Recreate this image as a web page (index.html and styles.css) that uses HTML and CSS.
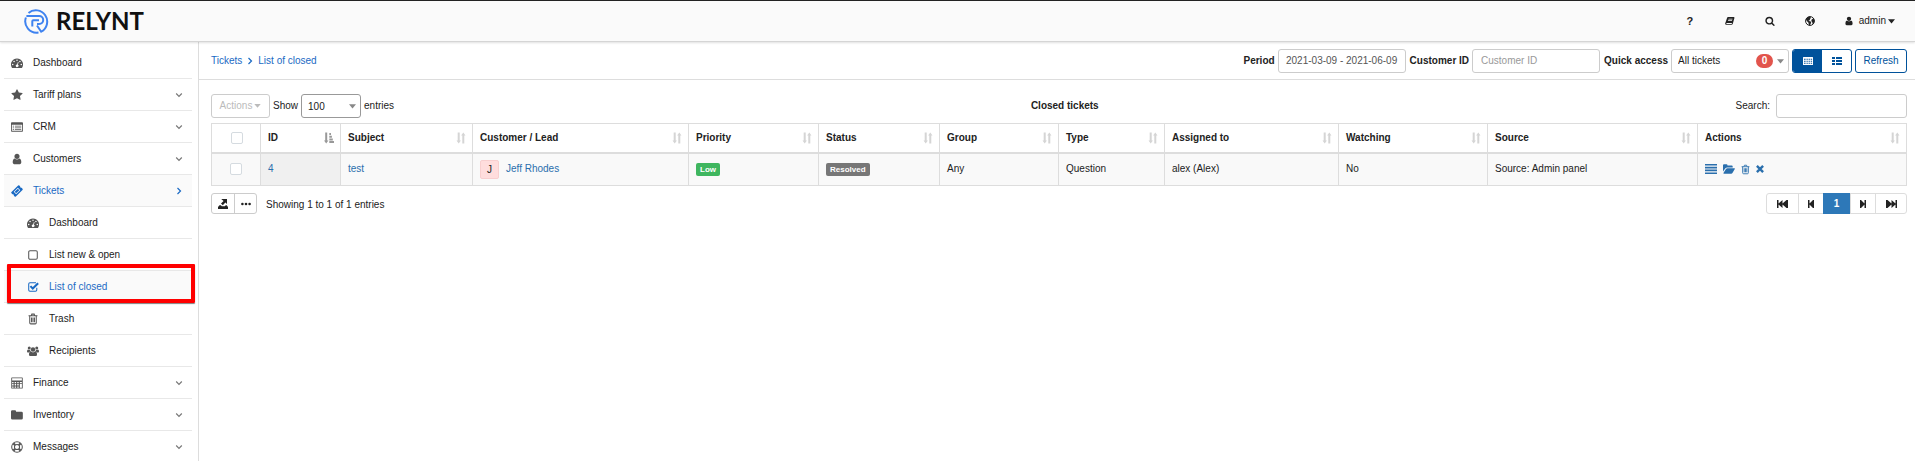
FILE: index.html
```html
<!DOCTYPE html>
<html lang="en">
<head>
<meta charset="utf-8">
<title>List of closed - Tickets</title>
<link rel="stylesheet" href="styles.css">
</head>
<body>
<svg class="sprite" aria-hidden="true">
  <symbol id="gauge" viewBox="0 0 16 14"><path fill-rule="evenodd" d="M8 1a8 8 0 0 0-6.800 12.200q.2.300.5.300h12.600q.3 0 .5-.3A8 8 0 0 0 8 1zM2.300 8a1 1 0 1 1 0 2 1 1 0 0 1 0-2zm1.800-3.900a1 1 0 1 1 0 2 1 1 0 0 1 0-2zM8 2.300a1 1 0 1 1 0 2 1 1 0 0 1 0-2zm1.200 3.200.9.300-.9 3.400a1.800 1.800 0 1 1-1-.300zM11.900 4.100a1 1 0 1 1 0 2 1 1 0 0 1 0-2zm1.800 3.900a1 1 0 1 1 0 2 1 1 0 0 1 0-2z"/></symbol>
  <symbol id="star" viewBox="0 0 1792 1792"><path d="M1728 647q0 22-26 48l-363 354 86 500q1 7 1 20 0 21-10.500 35.500t-30.500 14.500q-19 0-40-12l-449-236-449 236q-22 12-40 12-21 0-31.500-14.500t-10.500-35.500q0-6 2-20l86-500-364-354q-25-27-25-48 0-37 56-46l502-73 225-455q19-41 49-41t49 41l225 455 502 73q56 9 56 46z"/></symbol>
  <symbol id="crm" viewBox="0 0 14 12"><path fill-rule="evenodd" d="M1 .5h12q1 0 1 1v9q0 1-1 1H1q-1 0-1-1v-9q0-1 1-1zM1 3.500v7h12v-7zM2 4.500h1.500v1H2zm2.500 0H12v1H4.500zM2 6.500h1.500v1H2zm2.500 0H12v1H4.500zM2 8.500h1.500v1H2zm2.500 0H12v1H4.500z"/></symbol>
  <symbol id="user" viewBox="128 0 1536 1792"><path d="M1536 1399q0 109-62.500 187t-150.500 78h-854q-88 0-150.500-78t-62.500-187q0-85 8.500-160.500t31.500-152 58.500-131 94-89 134.500-34.500q131 128 313 128t313-128q76 0 134.500 34.500t94 89 58.500 131 31.500 152 8.500 160.500zm-256-887q0 159-112.500 271.500t-271.500 112.500-271.500-112.500-112.500-271.500 112.500-271.500 271.500-112.500 271.500 112.500 112.500 271.500z"/></symbol>
  <symbol id="ticket" viewBox="0 0 14 14"><path fill-rule="evenodd" d="M8.300.6q.7-.7 1.400 0l1 1a1.500 1.500 0 0 0 1.700 1.700l1 1q.7.700 0 1.400l-7.700 7.700q-.7.700-1.400 0l-1-1a1.500 1.500 0 0 0-1.700-1.700l-1-1q-.7-.7 0-1.400zM8 3.200 3.200 8 6 10.800 10.800 6zM8 4.300 9.700 6 6 9.700 4.300 8z"/></symbol>
  <symbol id="square" viewBox="0 0 14 14"><rect x="2" y="2" width="10" height="10" rx="1.500" fill="none" stroke="currentColor" stroke-width="1.200"/></symbol>
  <symbol id="check" viewBox="0 0 14 14"><path fill="none" stroke="currentColor" stroke-width="1.200" d="M11.400 8v2.500q0 1.500-1.500 1.500H3.500Q2 12 2 10.500v-7Q2 2 3.500 2h7"/><path fill="none" stroke="currentColor" stroke-width="2.400" d="m4 6 2.700 2.700 6.300-6.200"/></symbol>
  <symbol id="trash" viewBox="0 0 12 14"><path fill="none" stroke="currentColor" stroke-width="1.200" d="M.8 3.300h10.400M2.200 3.300v8q0 1.400 1.200 1.400h5.200q1.200 0 1.200-1.400v-8M4 3l.6-1.700h2.800L8 3M4.300 5.300v5.400M6 5.300v5.400M7.700 5.300v5.400"/></symbol>
  <symbol id="group" viewBox="0 0 16 14"><circle cx="3" cy="3" r="2"/><circle cx="13" cy="3" r="2"/><circle cx="8" cy="5" r="3"/><path d="M0 8q0-3 1.500-3Q3 6 4.200 5.600 4.300 7 5 8H3.400L2.500 9H1Q0 9 0 8zm16 0q0-3-1.500-3-1.500 1-2.700.6-.1 1.400-.8 2.400h1.600l.9 1H15q1 0 1-1zM2.600 12q0-4.200 2.700-4.200Q8 10 10.700 7.800q2.700 0 2.700 4.200 0 1.800-1.800 1.800H4.400Q2.600 13.800 2.600 12z"/></symbol>
  <symbol id="calc" viewBox="0 0 14 14"><path fill-rule="evenodd" d="M1 .5h12q.7 0 .7.700v11.600q0 .7-.7.700H1q-.7 0-.7-.7V1.200Q.3.500 1 .5zM1.300 1.500v2.700h11.400V1.500zM1.300 5.700v1.500H3V5.700zm3 0v1.500H6V5.700zm3 0v1.500H9V5.700zm3 0v1.500h2.400V5.700zM1.300 8.300v1.600H3V8.300zm3 0v1.600H6V8.300zm3 0v1.600H9V8.300zM1.300 11v1.500H3V11zm3 0v1.500H6V11zm3 0v1.500H9V11zm3-2.700v4.200h2.400V8.300z"/></symbol>
  <symbol id="folder" viewBox="0 0 14 12"><path d="M0 2Q0 .5 1.500.5h3Q6 .5 6 2.200h6.200q1.600 0 1.600 1.600v5.900q0 1.600-1.600 1.600H1.600Q0 11.300 0 9.700z"/></symbol>
  <symbol id="ring" viewBox="0 0 14 14"><g fill="none" stroke="currentColor" stroke-width="1.200"><circle cx="7" cy="7" r="6.200"/><circle cx="7" cy="7" r="3"/><path stroke-width="2.600" d="m2.700 2.700 2.200 2.200M11.300 2.700 9.100 4.900M2.700 11.300 4.900 9.100M11.300 11.300 9.100 9.100"/></g></symbol>
  <symbol id="down" viewBox="0 0 8 8"><path fill="none" stroke="currentColor" stroke-width="1.200" d="m1.200 2.500 2.800 2.800 2.800-2.800"/></symbol>
  <symbol id="right" viewBox="0 0 8 8"><path fill="none" stroke="currentColor" stroke-width="1.200" d="m2.500 1 3 3-3 3"/></symbol>
  <symbol id="caret" viewBox="0 0 8 5"><path d="M0 0h8L4 4.700z"/></symbol>
  <symbol id="book" viewBox="0 0 14 12"><path fill-rule="evenodd" d="M4.200.5h8q1.300 0 1 1.200l-2.300 8q-.4 1.600-1.900 1.600H1.800Q.2 11.300.2 9.600L3 1.400Q3.300.5 4.200.5zM5 3l-.3.900h5.600l.3-.9zM4.400 5l-.3.900h5.600l.3-.9zM2 8.800q-.5 1.400.5 1.400h6.800l.5-1.400z"/></symbol>
  <symbol id="search" viewBox="0 0 1792 1792"><path d="M1216 832q0-185-131.500-316.500t-316.500-131.500-316.500 131.500-131.500 316.500 131.500 316.500 316.500 131.500 316.500-131.500 131.500-316.500zm512 832q0 52-38 90t-90 38q-54 0-90-38l-343-342q-179 124-399 124-143 0-273.500-55.500t-225-150-150-225-55.500-273.500 55.500-273.500 150-225 225-150 273.500-55.500 273.500 55.500 225 150 150 225 55.500 273.500q0 220-124 399l343 343q37 37 37 90z"/></symbol>
  <symbol id="globe" viewBox="0 0 14 14"><circle cx="7" cy="7" r="6.200" fill="none" stroke="currentColor" stroke-width="1.400"/><path d="M1.200 4.500Q3 1 6.500.8L8.500 2.500 7 4.300l-.3 1.500L4.800 6.200l1.800 1.300 2.200.7-.8 2.800-1.200 2.300-1.500-.8-.4-3L2.500 7zM9.300 5 12 3.300l1.200 3.200-.7 3-1.700 2-.8-3L8.800 7z"/></symbol>
  <symbol id="sort" viewBox="0 0 10 12"><path d="M1.700.5h2v8h1.200L2.700 11.500.5 8.500h1.200zM6.300 11.500h2v-8h1.200L7.300.5 5.100 3.500h1.200z"/></symbol>
  <symbol id="asc" viewBox="0 0 10 12"><path d="M1.200.5h2v8h1.200L2.200 11.500 0 8.500h1.200zM5.300 1h1.700v2H5.300zm0 2.700h2.600v2H5.300zm0 2.700h3.500v2H5.300zm0 2.700H10v2H5.300z"/></symbol>
  <symbol id="table" viewBox="0 0 10 8"><path fill-rule="evenodd" d="M.5 0h9q.5 0 .5.500v7q0 .5-.5.500h-9Q0 8 0 7.500v-7Q0 0 .5 0zM1 1.800v1h1.600v-1zm2.500 0v1h1.300v-1zm2.100 0v1h1.300v-1zm2.100 0v1h1.400v-1zM1 3.700v1h1.600v-1zm2.500 0v1h1.300v-1zm2.100 0v1h1.300v-1zm2.100 0v1h1.400v-1zM1 5.700v1h1.600v-1zm2.500 0v1h1.300v-1zm2.100 0v1h1.300v-1zm2.100 0v1h1.400v-1z"/></symbol>
  <symbol id="list" viewBox="0 0 10 8"><path d="M0 0h3v2H0zm4 0h6v2H4zM0 3h3v2H0zm4 0h6v2H4zM0 6h3v2H0zm4 0h6v2H4z"/></symbol>
  <symbol id="lines" viewBox="0 0 12 10"><path d="M0 0h12v1.600H0zm0 2.800h12v1.600H0zm0 2.800h12v1.600H0zm0 2.800h12V10H0z"/></symbol>
  <symbol id="open" viewBox="0 0 12 10"><path d="M0 7.500V1.300Q0 .3 1 .3h2.500q1 0 1 1.100h4.200q1 0 1 1v1H4.300Q3 3.400 2.200 4.500zM.6 8.800 3 5.100q.5-.8 1.400-.8h7q.9 0 .4.800L9.600 8.800q-.5.900-1.400.9H1Q0 9.700.6 8.800z"/></symbol>
  <symbol id="cross" viewBox="0 0 8 8"><path fill="none" stroke="currentColor" stroke-width="2.400" d="m.9.900 6.200 6.200M7.100.9.900 7.100"/></symbol>
  <symbol id="export" viewBox="0 0 10 10"><path d="M3.200 0H9v5L7.400 3.600 4.800 6.200 3 4.500l2.600-2.600zM1.500 6.200h1.300l1 1h3l1-1h.9L10 8v2H0V8z"/></symbol>
  <symbol id="dots" viewBox="0 0 10 3"><circle cx="1.400" cy="1.500" r="1.300"/><circle cx="5" cy="1.500" r="1.300"/><circle cx="8.600" cy="1.500" r="1.300"/></symbol>
  <symbol id="first" viewBox="0 0 11 8"><path d="M0 0h1.500v3.500L5.500 0v3.500L9.500 0H11v8H9.500l-4-3.500V8l-4-3.500V8H0z"/></symbol>
  <symbol id="prev" viewBox="0 0 6 8"><path d="M0 0h1.500v3.500L5 0h1v8H5L1.500 4.500V8H0z"/></symbol>
  <symbol id="next" viewBox="0 0 6 8"><path d="M6 0H4.500v3.500L1 0H0v8h1l3.500-3.500V8H6z"/></symbol>
  <symbol id="last" viewBox="0 0 11 8"><path d="M11 0H9.500v3.500L5.500 0v3.500L1.500 0H0v8h1.500l4-3.500V8l4-3.500V8H11z"/></symbol>
</svg>

<header class="topbar">
  <a class="brand" href="#">
    <svg class="brand-mark" viewBox="0 0 26 26"><path d="M4.500 4.900A11.400 11.400 0 1 1 17.200 23.700L13 17.500M1.900 9.500A11.400 11.400 0 0 0 14.500 24.500"/><path d="M2.400 8h12.800a4 4 0 0 1 0 8H13M15 12.200H9.300q-1 0-1 1v5.300"/></svg>
    <span class="brand-name">RELYNT</span>
  </a>
  <nav class="topnav" aria-label="Tools">
    <button class="tool tool-help">?</button>
    <button class="tool" aria-label="Docs"><svg class="i10"><use href="#book"/></svg></button>
    <button class="tool" aria-label="Search"><svg class="i10"><use href="#search"/></svg></button>
    <button class="tool" aria-label="Language"><svg class="i10"><use href="#globe"/></svg></button>
    <button class="account"><svg class="i10"><use href="#user"/></svg><span>admin</span><svg class="caret"><use href="#caret"/></svg></button>
  </nav>
</header>

<div class="layout">
  <nav class="sidebar" aria-label="Main">
    <a class="item" href="#"><svg class="icon"><use href="#gauge"/></svg>Dashboard</a>
    <a class="item" href="#"><svg class="icon"><use href="#star"/></svg>Tariff plans<svg class="chev"><use href="#down"/></svg></a>
    <a class="item" href="#"><svg class="icon"><use href="#crm"/></svg>CRM<svg class="chev"><use href="#down"/></svg></a>
    <a class="item" href="#"><svg class="icon"><use href="#user"/></svg>Customers<svg class="chev"><use href="#down"/></svg></a>
    <a class="item active" href="#"><svg class="icon"><use href="#ticket"/></svg>Tickets<svg class="chev"><use href="#right"/></svg></a>
    <a class="item sub" href="#"><svg class="icon"><use href="#gauge"/></svg>Dashboard</a>
    <a class="item sub" href="#"><svg class="icon"><use href="#square"/></svg>List new &amp; open</a>
    <a class="item sub active marked" href="#"><svg class="icon"><use href="#check"/></svg>List of closed</a>
    <a class="item sub" href="#"><svg class="icon"><use href="#trash"/></svg>Trash</a>
    <a class="item sub" href="#"><svg class="icon"><use href="#group"/></svg>Recipients</a>
    <a class="item" href="#"><svg class="icon"><use href="#calc"/></svg>Finance<svg class="chev"><use href="#down"/></svg></a>
    <a class="item" href="#"><svg class="icon"><use href="#folder"/></svg>Inventory<svg class="chev"><use href="#down"/></svg></a>
    <a class="item" href="#"><svg class="icon"><use href="#ring"/></svg>Messages<svg class="chev"><use href="#down"/></svg></a>
  </nav>

  <main class="content">
    <div class="pagebar">
      <nav class="crumbs" aria-label="Breadcrumb"><a href="#">Tickets</a><svg class="i8"><use href="#right"/></svg><a href="#">List of closed</a></nav>
      <form class="filters">
        <label for="period">Period</label>
        <input class="field period" id="period" type="text" value="2021-03-09 - 2021-06-09">
        <label for="customer">Customer ID</label>
        <input class="field" id="customer" type="text" placeholder="Customer ID">
        <label for="quick">Quick access</label>
        <span class="select quick"><select id="quick"><option>All tickets</option></select><span class="badge">0</span><svg class="arrow"><use href="#caret"/></svg></span>
        <span class="toggle"><button type="button" class="on" aria-label="Table view"><svg class="view"><use href="#table"/></svg></button><button type="button" aria-label="List view"><svg class="view"><use href="#list"/></svg></button></span>
        <button type="button" class="refresh">Refresh</button>
      </form>
    </div>

    <section class="panel">
      <div class="tools">
        <div class="tools-side">
          <button class="actions" disabled>Actions<svg class="small-caret"><use href="#caret"/></svg></button>
          <label for="length">Show</label>
          <span class="select length"><select id="length"><option>100</option></select><svg class="arrow"><use href="#caret"/></svg></span>
          <span>entries</span>
        </div>
        <h1 class="title">Closed tickets</h1>
        <div class="tools-side tools-end">
          <label for="find">Search:</label>
          <input class="field find" id="find" type="search">
        </div>
      </div>

      <table class="grid">
        <colgroup><col class="c-check"><col class="c-id"><col class="c-subject"><col class="c-customer"><col class="c-priority"><col class="c-status"><col class="c-group"><col class="c-type"><col class="c-assigned"><col class="c-watching"><col class="c-source"><col class="c-actions"></colgroup>
        <thead>
          <tr>
            <th class="pick"><input type="checkbox" aria-label="Select all"></th>
            <th><div class="head">ID<svg class="sort sorted"><use href="#asc"/></svg></div></th>
            <th><div class="head">Subject<svg class="sort"><use href="#sort"/></svg></div></th>
            <th><div class="head">Customer / Lead<svg class="sort"><use href="#sort"/></svg></div></th>
            <th><div class="head">Priority<svg class="sort"><use href="#sort"/></svg></div></th>
            <th><div class="head">Status<svg class="sort"><use href="#sort"/></svg></div></th>
            <th><div class="head">Group<svg class="sort"><use href="#sort"/></svg></div></th>
            <th><div class="head">Type<svg class="sort"><use href="#sort"/></svg></div></th>
            <th><div class="head">Assigned to<svg class="sort"><use href="#sort"/></svg></div></th>
            <th><div class="head">Watching<svg class="sort"><use href="#sort"/></svg></div></th>
            <th><div class="head">Source<svg class="sort"><use href="#sort"/></svg></div></th>
            <th><div class="head">Actions<svg class="sort"><use href="#sort"/></svg></div></th>
          </tr>
        </thead>
        <tbody>
          <tr>
            <td class="pick"><input type="checkbox" aria-label="Select ticket 4"></td>
            <td class="sorted-cell"><a href="#">4</a></td>
            <td><a href="#">test</a></td>
            <td><div class="person"><span class="avatar">J</span><a href="#">Jeff Rhodes</a></div></td>
            <td><span class="tag low">Low</span></td>
            <td><span class="tag resolved">Resolved</span></td>
            <td>Any</td>
            <td>Question</td>
            <td>alex (Alex)</td>
            <td>No</td>
            <td>Source: Admin panel</td>
            <td><div class="row-actions">
              <a href="#" aria-label="View"><svg class="wide"><use href="#lines"/></svg></a>
              <a href="#" aria-label="Open"><svg class="wide"><use href="#open"/></svg></a>
              <a href="#" aria-label="Delete"><svg class="bin"><use href="#trash"/></svg></a>
              <a href="#" aria-label="Close"><svg class="i8"><use href="#cross"/></svg></a>
            </div></td>
          </tr>
        </tbody>
      </table>

      <div class="foot">
        <div class="group"><button aria-label="Export"><svg class="i10"><use href="#export"/></svg></button><button aria-label="More"><svg class="i10"><use href="#dots"/></svg></button></div>
        <span class="info">Showing 1 to 1 of 1 entries</span>
        <div class="group pages">
          <button class="wide-page" aria-label="First"><svg class="double"><use href="#first"/></svg></button><button aria-label="Previous"><svg class="single"><use href="#prev"/></svg></button><button class="current">1</button><button aria-label="Next"><svg class="single"><use href="#next"/></svg></button><button class="wide-page" aria-label="Last"><svg class="double"><use href="#last"/></svg></button>
        </div>
      </div>
    </section>
  </main>
</div>
</body>
</html>
```
FILE: styles.css
```css
* { box-sizing: border-box; }
body {
  margin: 0;
  height: 100vh;
  display: flex;
  flex-direction: column;
  overflow: hidden;
  background: #fff;
  color: #222;
  font-family: "Liberation Sans", Arial, sans-serif;
  font-size: 10px;
  line-height: 14px;
}
button, input, select { font: inherit; color: inherit; margin: 0; }
button { background: none; border: 0; padding: 0; }
a { color: #2a6fad; text-decoration: none; }
svg { fill: currentColor; flex: none; display: block; }
.sprite { display: none; }
.i8 { width: 8px; height: 8px; }
.i10 { width: 10px; height: 10px; }

.topbar {
  flex: none;
  display: flex;
  align-items: center;
  justify-content: space-between;
  height: 42px;
  padding: 0 20px 0 24px;
  background: #fafafa;
  border-top: 1px solid #222;
  border-bottom: 1px solid #d5d5d5;
  box-shadow: 0 1px 2px rgba(0, 0, 0, 0.12);
  z-index: 1;
}
.brand { display: flex; align-items: center; gap: 6px; color: #111; }
.brand-mark { width: 26px; height: 26px; fill: none; stroke: #3f83f0; stroke-width: 2; }
.brand-name { font: 700 24px/26px Lato, sans-serif; }
.topnav { display: flex; align-items: center; }
.tool { width: 40px; display: flex; justify-content: center; }
.tool-help { font-weight: bold; font-size: 11px; }
.account { display: flex; align-items: center; gap: 4px; padding-left: 14px; }
.account span { margin-left: 1px; }
.caret { width: 7px; height: 5px; margin-left: -2px; }

.layout { flex: 1; min-height: 0; display: flex; }
.sidebar {
  flex: none;
  width: 199px;
  padding: 5px 6px 0 4px;
  border-right: 1px solid #ddd;
  overflow: hidden;
}
.item {
  position: relative;
  display: flex;
  align-items: center;
  gap: 10px;
  height: 32px;
  padding: 0 9px 0 7px;
  border-bottom: 1px solid #e8e8e8;
  color: #222;
}
.item.sub { padding-left: 23px; }
.item.active { background: #fafafa; color: #1a6ac4; }
.icon { width: 12px; height: 12px; color: #555; }
.active .icon { color: inherit; }
.chev { width: 8px; height: 8px; margin-left: auto; color: #777; }
.active .chev { color: inherit; }
.marked::after {
  content: "";
  position: absolute;
  inset: -7px -3px -1px 3px;
  border: 4px solid #f00;
  border-radius: 1px;
  box-shadow: 0 1px 1px rgba(0, 0, 0, 0.5);
}

.content { flex: 1; min-width: 0; }
.pagebar {
  display: flex;
  align-items: center;
  justify-content: space-between;
  height: 38px;
  padding: 0 8px 0 12px;
  border-bottom: 1px solid #ddd;
}
.crumbs { display: flex; align-items: center; gap: 4px; }
.crumbs, .crumbs a { color: #1a6ac4; }
.filters { display: flex; align-items: center; }
.filters label { margin: 0 3px 0 4px; font-weight: bold; }
.field {
  width: 128px;
  height: 24px;
  padding: 0 8px;
  border: 1px solid #ccc;
  border-radius: 3px;
  background: #fff;
  color: #555;
}
.field::placeholder { color: #999; }
.period { text-align: center; padding: 0; }
.find { width: 131px; }
.select { position: relative; display: flex; height: 24px; }
.select select {
  width: 100%;
  appearance: none;
  border: 1px solid #ccc;
  border-radius: 3px;
  background: #fff;
  padding: 1px 6px 0;
}
.quick { width: 118px; }
.length { width: 60px; }
.length select { border-color: #999; }
.arrow { position: absolute; right: 5px; top: 10px; width: 7px; height: 5px; color: #888; }
.badge {
  position: absolute;
  right: 16px;
  top: 5px;
  width: 17px;
  border-radius: 7px;
  background: #e2544c;
  color: #fff;
  font-weight: bold;
  text-align: center;
}
.toggle { display: flex; margin: 0 3px; border: 1px solid #00529b; border-radius: 3px; overflow: hidden; }
.toggle button { display: grid; place-items: center; width: 29px; height: 22px; color: #00529b; }
.toggle .on { background: #00529b; color: #fff; }
.view { width: 10px; height: 8px; }
.refresh { width: 52px; height: 24px; border: 1px solid #00529b; border-radius: 3px; color: #00529b; }

.panel { padding: 14px 8px 0 12px; }
.tools { display: flex; align-items: center; justify-content: space-between; margin-bottom: 5px; }
.tools-side { display: flex; align-items: center; gap: 3px; }
.tools-end { gap: 6px; }
.actions {
  display: flex;
  align-items: center;
  justify-content: center;
  gap: 2px;
  width: 59px;
  height: 24px;
  border: 1px solid #ccc;
  border-radius: 3px;
  color: #bbb;
}
.small-caret { width: 7px; height: 4px; }
.title { margin: 0; font-size: 10px; line-height: 14px; }

.grid { width: 100%; table-layout: fixed; border-collapse: collapse; }
.c-check { width: 49px; }
.c-id { width: 80px; }
.c-subject { width: 132px; }
.c-customer { width: 216px; }
.c-priority { width: 130px; }
.c-status { width: 121px; }
.c-group { width: 119px; }
.c-type { width: 106px; }
.c-assigned { width: 174px; }
.c-watching { width: 149px; }
.c-source { width: 210px; }
.c-actions { width: 209px; }
.grid th, .grid td { height: 33px; padding: 0 7px; border: 1px solid #ddd; text-align: left; }
.grid th { height: 29px; padding-right: 6px; border-bottom-width: 2px; }
.grid td { background: #f9f9f9; }
.grid .sorted-cell { background: #f0f0f0; }
.grid .pick { text-align: center; }
.pick input {
  appearance: none;
  display: block;
  width: 12px;
  height: 12px;
  margin: 0 auto;
  border: 1px solid #d5dbe0;
  border-radius: 2px;
  background: #fff;
}
.head { display: flex; align-items: center; justify-content: space-between; }
.sort { width: 10px; height: 12px; color: #d5d5d5; }
.sorted { color: #999; }
.person { display: flex; align-items: center; gap: 7px; }
.avatar {
  width: 19px;
  height: 19px;
  border: 1px solid #f8cfcf;
  border-radius: 2px;
  background: #fdd;
  line-height: 17px;
  text-align: center;
}
.tag {
  display: inline-block;
  padding: 0 4px;
  border-radius: 2px;
  color: #fff;
  font-size: 8px;
  font-weight: bold;
  line-height: 13px;
  vertical-align: middle;
}
.low { background: #3fb65f; }
.resolved { background: #777; }
.row-actions { display: flex; align-items: center; gap: 6px; }
.wide { width: 12px; height: 10px; }
.bin { width: 9px; height: 11px; }

.foot { display: flex; align-items: flex-start; margin-top: 7px; }
.info { margin: 5px 0 0 9px; }
.group { display: flex; border: 1px solid #ccc; border-radius: 3px; }
.group button { display: grid; place-items: center; width: 22px; height: 19px; }
.group button + button { border-left: 1px solid #ccc; }
.pages { margin-left: auto; border-color: #ddd; }
.pages button { width: 25px; }
.pages button + button { border-color: #ddd; }
.pages .wide-page { width: 31px; }
.pages .current { width: 27px; height: 21px; margin: -1px 0; border: 0; background: #2d78b8; color: #fff; font-weight: bold; }
.double { width: 11px; height: 8px; }
.single { width: 6px; height: 8px; }
```
